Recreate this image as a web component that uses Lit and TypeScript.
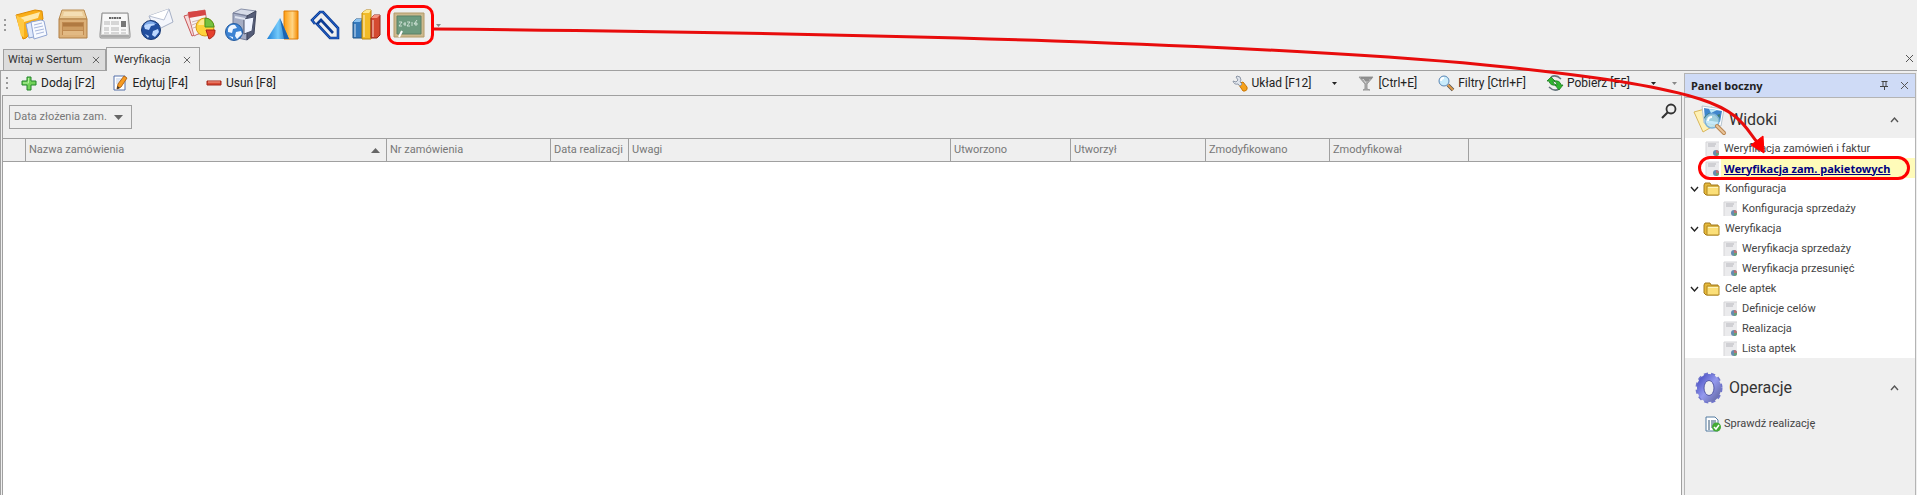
import { LitElement, html, css, svg, nothing } from "lit";
import { customElement, state } from "lit/decorators.js";

const box = (size: number, body: unknown) =>
  html`<svg class="icon" width=${size} height=${size} viewBox="0 0 ${size} ${size}" aria-hidden="true">${body}</svg>`;

const big = {
  notes: svg`<g stroke-linejoin="round"><path d="m1 6 19-5 7 1 1 8-17 19-3 1z" fill="#f9ae17" stroke="#dc8a05"/><path d="m4 9 21-6-2 6-14 4-1 14z" fill="#ffe9a8"/><path d="m1 6 8 5v17l-3-1z" fill="#ffc943"/><path d="m11 15 8-3 4 15-9 2z" fill="#dfe9fc" stroke="#8aa0cf"/><path d="m16 13 10-2 3 1 3 14-13 4z" fill="#f7faff" stroke="#91a5d2"/><path d="m19 16 8-2m-8 5 9-2m-8 5 9-2m-8 5 8-2" stroke="#a9b8dc" fill="none"/></g>`,
  box: svg`<path d="M5 1h22l3 9H2z" fill="#ebcb97" stroke="#b98c52"/><path d="M7 3h18l1 4H6z" fill="#f4deb4"/><path d="M2 10h28v19H2z" fill="#dcb078" stroke="#b07e45"/><path d="M5 13h22v13H5z" fill="#c08a50"/><path d="M6 14h20v3H6z" fill="#b07a42"/><path d="M6 18h20v3H6z" fill="#cd9d63"/><path d="M6 22h20v4H6z" fill="#e2b983"/>`,
  news: svg`<path d="M3 4h26l2 21v3q0 1-1 1H2q-1 0-1-1v-3z" fill="#d9d9d8" stroke="#8f8f8f"/><path d="M4 5h24l1 20H3z" fill="#f8f8f8"/><path d="M10 9h12" stroke="#666" stroke-width="2" stroke-dasharray="2 .5"/><path d="M5 13h6m1 0h8M5 15h6m1 0h8M5 19h5m2 0h8M5 21h5m2 0h8m2 0h5M5 24h5m2 0h8m2 0h5" stroke="#b4b4b4"/><path d="M22 12h5v6h-5z" fill="#777"/><path d="M2 27h28" stroke="#aaa" stroke-width="2"/>`,
  mail: svg`<path d="M8 7 28 0l4 13-18 9z" fill="#f4f6fc" stroke="#a6b0c5"/><path d="m8 7 15 4 5-11" fill="#fff" stroke="#b8c1d4"/><circle cx="10" cy="21" r="9.500" fill="#234f9f" stroke="#183974"/><path d="M3 17q3-5 9-4l2 3-4 1-2 4-4-1zm9 5 5-2 1 3-4 5-3-2zM4 25l4 2-1 2z" fill="#bdd8ff"/><path d="M3 16q5-7 13-1-6-1-13 1" fill="#7ea9e8"/>`,
  report: svg`<path d="m1 7 14-4 6 20-12 4z" fill="#f6dada" stroke="#c85555"/><path d="m5 4 17-3 3 19-14 7z" fill="#f9f2f2" stroke="#c77"/><path d="m5 3 17-2 1 5L6 9z" fill="#d64545"/><path d="m9 13 7-2m-7 5 5-2m-4 5 3-1" stroke="#ccb3b3"/><circle cx="22" cy="18" r="9" fill="#ffd23b" stroke="#d79a12"/><path d="M22 18V9a9 9 0 0 1 9 9z" fill="#77c13e" stroke="#4b9222"/><path d="M23 21h9a9 9 0 0 1-6 9z" fill="#e6402d" stroke="#a92214"/><path d="M15 16q2-6 6-6v6z" fill="#ffe98f"/>`,
  server: svg`<path d="m8 4 8-4 15 2-6 5z" fill="#d6dbe8" stroke="#8991a8"/><path d="m8 4 14 3v24L8 28z" fill="#a5adc5" stroke="#767e98"/><path d="m22 7 9-5-2 23-7 6z" fill="#555d78" stroke="#3e455c"/><path d="m19 10 10-2-2 14-8 3z" fill="#eef3ff" stroke="#4b536c"/><path d="m10 8 10 2" stroke="#dfe4f0" stroke-width="2"/><circle cx="9" cy="23" r="8.500" fill="#3c83d3" stroke="#245b9f"/><path d="M3 20q2-5 7-4l2 3-4 1-1 4-4-1zm8 3 5-1 1 3-5 5-2-3zm-7 4 4 1v2z" fill="#eef6ff"/>`,
  shapes: svg`<defs><linearGradient id="g-blue" x2="1"><stop stop-color="#1d7fd6"/><stop offset=".5" stop-color="#73c9fa"/><stop offset="1" stop-color="#1565b7"/></linearGradient><linearGradient id="g-orange" x2="1"><stop stop-color="#ff9c0e"/><stop offset=".6" stop-color="#ffd585"/><stop offset="1" stop-color="#f48a00"/></linearGradient></defs><path d="M17 2h14v28H17z" fill="url(#g-orange)" stroke="#dc7c08"/><path d="M0 30 13 9l9 21z" fill="url(#g-blue)"/><path d="m13 9 4 21h5z" fill="#1b64b2"/>`,
  clip: svg`<path d="M6 15 3 11l8-8h3l15 16v10h-8L8 15l4-4 12 13" fill="none" stroke="#0d3c94" stroke-width="2.600"/><path d="M6 15 3 11l8-8h3l15 16v10h-8L8 15" fill="none" stroke="#2d72df" stroke-width=".8"/>`,
  bars: svg`<path d="m2 13 3-3h6v19H2z" fill="#3479bd" stroke="#205486"/><path d="m2 13 3-3h6l-2 3z" fill="#8dc3ef"/><path d="m11 4 4-3h5v29h-9z" fill="#f1bb27" stroke="#b88512"/><path d="m11 4 4-3h5l-2 3z" fill="#ffe88d"/><path d="m20 9 3-3h6v20l-3 3h-6z" fill="#d44a31" stroke="#94281a"/><path d="m20 9 3-3h6l-3 3z" fill="#f59480"/><path d="M13 6v22M22 11v17M4 15v13" stroke="#fff" opacity=".4" stroke-width="2"/>`,
  board: svg`<path d="M1 4h30v24H1z" fill="#cdb98e" stroke="#b39a68"/><path d="M4 7h24v18H4z" fill="#6d9a7e" stroke="#5a8167"/><path d="M6 13h3l-3 4h3m1-2h3m-1-2v4m2-4h3l-3 4h3m1-3h2m-2 2h2m4-5-3 4h4m-2-2v4" stroke="#e0ede4" stroke-width=".8" fill="none"/><path d="m6 28 3-6" stroke="#fff" stroke-width="2"/>`,
};

const small = {
  add: svg`<path d="M6 2h4v4h5v4h-5v5H6v-5H1V6h5z" fill="#71d158" stroke="#23852b"/><path d="M7.500 3v5H2" stroke="#b8f1a5" fill="none"/>`,
  edit: svg`<path d="M1 1h11v14H1z" fill="#fff" stroke="#526ea8"/><path d="M3 4h6M3 6h6M3 8h4" stroke="#b9c9e4"/><path d="m4 14 1-5 6-8 3 2-6 9z" fill="#f79b21" stroke="#b3681a"/><path d="m4 14 .5-3L7 13z" fill="#333"/>`,
  remove: svg`<path d="M1 6h14v4H1z" fill="#d94a34" stroke="#a22419"/><path d="M2 7h12" stroke="#f3a18f"/>`,
  wrench: svg`<path d="m8 8 3-1 4 5q1 3-2 4h-2l-4-6z" fill="#f5a11c" stroke="#c97706"/><path d="M5 1Q9 1 9 5l-1 2 2 2-2 2-2-2Q2 10 1 6l3 1 2-2-2-3z" fill="#dfe4ec" stroke="#8f99a8"/>`,
  funnel: svg`<path d="M1 2h14L9 9v5l3 1H5l2-1V9z" fill="#aaa" stroke="#999"/><path d="M3 3h11M5 5h6" stroke="#777"/><path d="m5 4 3 4" stroke="#ddd"/>`,
  lens: svg`<circle cx="6" cy="6" r="5" fill="#c9ecfc" stroke="#5a86b4"/><path d="M3 6q0-3 3-3" stroke="#fff" stroke-width="2" fill="none"/><path d="m10 10 5 5" stroke="#555" stroke-width="3.500"/><path d="m10 10 5 5" stroke="#e09a48" stroke-width="2"/>`,
  refresh: svg`<path d="M4 2q5-3 10 2M12 14q-5 3-10-2" stroke="#66757c" stroke-width="1.500" fill="none"/><path d="m0 6 4-4 4 4H6q0 3 3 4-6 1-7-4zM16 10l-4 5-4-5h2q0-3-3-4 6-1 7 4z" fill="#2fb52f" stroke="#197c1d" stroke-width=".8"/>`,
  page: svg`<path d="M1 1h13v14H1z" fill="#ebebed"/><path d="M1 15V1h13" fill="none" stroke="#d5d5d8"/><path d="M3 3h8M3 5h7" stroke="#b5b5bb"/><circle cx="11" cy="12" r="3" fill="#668bb0"/><path d="M11 12V9a3 3 0 0 1 3 3z" fill="#b97272"/><path d="M11 12h3a3 3 0 0 1-3 3z" fill="#68a077"/>`,
  folder: svg`<path d="m0 4 1-2h5l1 2h7v10H2l-2-2z" fill="#e5b83a" stroke="#a37b1d"/><path d="M3 5h12v9H3z" fill="#fbdf78" stroke="#b28922"/><path d="M4 6.500h10" stroke="#fff4ba"/>`,
  check: svg`<path d="M1 1h9l3 3v11H1z" fill="#fff" stroke="#537ba0"/><path d="M3 5h2m1 0h5M3 7h2m1 0h5M3 9h2m1 0h4M3 11h2m1 0h2M3 13h2" stroke="#315273"/><circle cx="11.500" cy="11" r="4.500" fill="#44aa35"/><path d="m9 11 2 2 3-4" fill="none" stroke="#fff" stroke-width="1.500"/>`,
};

const cross = (s = 9) =>
  html`<svg class="icon" width=${s} height=${s} viewBox="0 0 9 9" aria-hidden="true"><path d="m1 1 7 7m0-7-7 7" stroke="#555" fill="none"/></svg>`;
const caret = (light = false) =>
  html`<svg class="icon" width="5" height="3" viewBox="0 0 5 3" aria-hidden="true"><path d="M0 0h5L2.500 3z" fill=${light ? "#888" : "#222"} /></svg>`;
const chevron = (up: boolean) =>
  html`<svg class="icon" width="9" height="6" viewBox="0 0 9 6" aria-hidden="true"><path d=${up ? "m1 5 3.500-4L8 5" : "m1 1 3.500 4L8 1"} stroke=${up ? "#555" : "#222"} stroke-width="1.400" fill="none" /></svg>`;

const widoki = svg`<path d="m0 8 18-5 3 18-12 7z" fill="#fff1b5" stroke="#d8b65a"/><path d="m8 2 22 3-3 17-17-3z" fill="#fff" stroke="#b7c5cf"/><path d="m10 4 18 3-2 11-15-2z" fill="#3f86cc"/><path d="m10 13 5-4 5 3 6-2-1 8-14-2z" fill="#397a70"/><path d="m15 5 8 1-6 3z" fill="#bde9f8"/><circle cx="18" cy="17" r="7" fill="#b9e5f8" fill-opacity=".8" stroke="#7fb4d8" stroke-width="1.500"/><path d="M14 17q0-4 4-4" fill="none" stroke="#fff" stroke-width="2"/><path d="m23 22 7 7" stroke="#b98550" stroke-width="4" stroke-linecap="round"/><path d="m23 22 7 7" stroke="#eac59a" stroke-width="2" stroke-linecap="round"/>`;
const gear = svg`<defs><linearGradient id="g-gear" x2="1" y2="1"><stop stop-color="#5258c8"/><stop offset=".5" stop-color="#9499ee"/><stop offset="1" stop-color="#6a6fae"/></linearGradient></defs><ellipse cx="15" cy="16" rx="12" ry="14" fill="none" stroke="#6f74cc" stroke-width="3" stroke-dasharray="4 3"/><ellipse cx="15" cy="16" rx="8.500" ry="10.500" fill="none" stroke="url(#g-gear)" stroke-width="7"/><ellipse cx="15" cy="16" rx="5" ry="7.500" fill="#efefef" stroke="#5257a7"/>`;

const modules: [string, unknown][] = [
  ["Notatki", big.notes], ["Magazyn", big.box], ["Wiadomości", big.news], ["Poczta", big.mail], ["Raporty", big.report],
  ["Serwer", big.server], ["Kształty", big.shapes], ["Załączniki", big.clip], ["Wykresy", big.bars], ["Weryfikacja", big.board],
];

const columns: [string, string][] = [
  ["", "c-mark"], ["Nazwa zamówienia", "c-name"], ["Nr zamówienia", "c-no"], ["Data realizacji", "c-date"], ["Uwagi", "c-notes"],
  ["Utworzono", "c-created"], ["Utworzył", "c-author"], ["Zmodyfikowano", "c-mod"], ["Zmodyfikował", "c-editor"], ["", ""],
];

type Group = { title: string; items: string[] };
const groups: Group[] = [
  { title: "Konfiguracja", items: ["Konfiguracja sprzedaży"] },
  { title: "Weryfikacja", items: ["Weryfikacja sprzedaży", "Weryfikacja przesunięć"] },
  { title: "Cele aptek", items: ["Definicje celów", "Realizacja", "Lista aptek"] },
];

@customElement("app-root")
export class AppRoot extends LitElement {
  @state() private active = 1;

  static styles = css`
    :host {
      display: flex;
      flex-direction: column;
      position: relative;
      min-height: 100vh;
      box-sizing: border-box;
      background: #efefef;
      color: #333;
      font: 11px/20px Roboto, sans-serif;
      overflow: hidden;
    }
    * { box-sizing: border-box; }
    button, select { font: inherit; color: inherit; background: none; border: 0; padding: 0; margin: 0; }
    a { color: inherit; text-decoration: none; }
    .icon { display: block; flex: none; overflow: visible; }
    .grip { width: 2px; height: 12px; background: repeating-linear-gradient(#999 0 2px, transparent 2px 5px); }

    .modules { display: flex; align-items: center; gap: 10px; height: 47px; padding: 2px 4px 0; }
    .modules .grip { margin-right: -1px; }
    .module { position: relative; }
    .marked::after { content: ""; position: absolute; inset: -4px -9px -4px -6px; border: 3px solid #f00; border-radius: 10px; }
    .more { align-self: flex-start; margin: 22px 0 0 1px; }

    .tabs { display: flex; align-items: flex-end; height: 24px; padding-left: 3px; border-bottom: 1px solid #a0a0a0; }
    .tab { display: flex; align-items: center; gap: 10px; height: 21px; padding: 0 5px 0 4px; background: #dcdcdc; border: 1px solid #a0a0a0; border-bottom: 0; }
    .tab.on { gap: 12px; height: 24px; padding: 0 8px 0 7px; margin-bottom: -1px; background: #efefef; }
    .tabs .close { margin: 0 3px 7px auto; }

    .body { flex: 1; display: flex; }
    .main { flex: 1; display: flex; flex-direction: column; min-width: 0; border-left: 1px solid #a0a0a0; padding-left: 1px; }
    .bar { display: flex; align-items: center; height: 25px; padding: 0 5px 0 4px; border-bottom: 1px solid #a0a0a0; font-size: 12px; line-height: 24px; color: #222; }
    .bar button { display: flex; align-items: center; gap: 4px; white-space: nowrap; }
    .left, .right { display: flex; align-items: center; }
    .left { gap: 18px; margin-left: 13px; }
    .right { margin-left: auto; gap: 21px; }
    .right .end { margin-left: -5px; }

    .sheet { flex: 1; display: flex; flex-direction: column; border: 1px solid #a0a0a0; border-width: 0 1px; background: #fff; }
    .filter { display: flex; align-items: center; height: 42px; padding: 0 4px 0 6px; background: #efefef; }
    .combo { position: relative; display: flex; align-items: center; }
    .combo select { appearance: none; width: 123px; height: 24px; padding: 0 20px 0 4px; border: 1px solid #a0a0a0; color: #777; }
    .combo svg { position: absolute; right: 9px; pointer-events: none; }
    .find { margin: -12px 0 0 auto; }

    table { width: 100%; table-layout: fixed; border-collapse: separate; border-spacing: 0; }
    th { height: 24px; padding: 0 3px; border: solid #a0a0a0; border-width: 1px 1px 1px 0; background: #efefef; color: #777; font-weight: 400; text-align: left; white-space: nowrap; overflow: hidden; }
    th:last-child { border-right: 0; }
    .th { display: flex; align-items: center; justify-content: space-between; padding-right: 3px; }
    .c-mark { width: 23px; } .c-name { width: 361px; } .c-no { width: 164px; } .c-date { width: 78px; } .c-notes { width: 322px; }
    .c-created { width: 120px; } .c-author { width: 135px; } .c-mod { width: 124px; } .c-editor { width: 139px; }

    aside { flex: none; width: 232px; margin: 2px 1px 0 2px; border: 1px solid #b4b4b4; border-bottom: 0; }
    .head { display: flex; align-items: center; gap: 11px; height: 24px; padding: 0 6px; background: #cfdbf6; font-family: "Noto Sans", sans-serif; font-weight: 700; color: #222; border-bottom: 1px solid #b4b4b4; }
    .head span { flex: 1; }
    .section { display: flex; align-items: center; gap: 3px; height: 40px; padding: 4px 16px 0 9px; font-size: 16px; color: #333; }
    .section span { flex: 1; }
    .section.ops { height: 55px; }
    .tree { background: #fff; }
    .row { display: flex; align-items: center; gap: 3px; height: 20px; padding: 1px 0 0 20px; color: #444; }
    .row.deep { padding-left: 38px; }
    .row.group { padding-left: 5px; gap: 5px; width: 100%; }
    .row.on { position: relative; background: linear-gradient(90deg, transparent 36px, #fffbb9 36px); color: #000080; font-family: "Noto Sans", sans-serif; font-weight: 700; }
    .row.on span { text-decoration: underline; }
    .row.on::after { content: ""; position: absolute; inset: -2px 5px -2px 13px; border: 3px solid #f00; border-radius: 12px; }
    .arrow { position: absolute; inset: 0 0 auto; width: 100%; height: 160px; pointer-events: none; }
  `;

  private leaf(text: string, deep = false, on = false) {
    return html`<a href="#" class="row ${deep ? "deep" : ""} ${on ? "on" : ""}">${box(16, small.page)}<span>${text}</span></a>`;
  }

  private tab(text: string, i: number) {
    return html`<button class="tab ${this.active === i ? "on" : ""}" role="tab" aria-selected=${this.active === i} @click=${() => (this.active = i)}>${text}${cross(8)}</button>`;
  }

  render() {
    return html`
      <div class="modules" role="toolbar" aria-label="Moduły">
        <i class="grip"></i>
        ${modules.map(([name, icon], i) => html`<button class="module ${i === 9 ? "marked" : ""}" aria-label=${name}>${box(32, icon)}</button>`)}
        <button class="more" aria-label="Więcej">${caret(true)}</button>
      </div>
      <div class="tabs" role="tablist">
        ${this.tab("Witaj w Sertum", 0)}${this.tab("Weryfikacja", 1)}
        <button class="close" aria-label="Zamknij">${cross()}</button>
      </div>
      <div class="body">
        <main class="main">
          <div class="bar">
            <i class="grip"></i>
            <div class="left">
              <button>${box(16, small.add)}Dodaj [F2]</button>
              <button>${box(16, small.edit)}Edytuj [F4]</button>
              <button>${box(16, small.remove)}Usuń [F8]</button>
            </div>
            <div class="right">
              <button>${box(16, small.wrench)}Układ [F12]</button>
              <button aria-label="Opcje układu">${caret()}</button>
              <button>${box(16, small.funnel)}[Ctrl+E]</button>
              <button>${box(16, small.lens)}Filtry [Ctrl+F]</button>
              <button>${box(16, small.refresh)}Pobierz [F5]</button>
              <button aria-label="Opcje pobierania">${caret()}</button>
              <button class="end" aria-label="Więcej">${caret(true)}</button>
            </div>
          </div>
          <div class="sheet">
            <div class="filter">
              <label class="combo">
                <select aria-label="Filtr"><option>Data złożenia zam.</option></select>
                <svg width="9" height="5" viewBox="0 0 9 5"><path d="M0 0h9L4.500 5z" fill="#666" /></svg>
              </label>
              <button class="find" aria-label="Szukaj">
                <svg class="icon" width="16" height="16" viewBox="0 0 16 16"><circle cx="10" cy="6" r="4.500" fill="none" stroke="#333" stroke-width="1.800" /><path d="m7 9-6 6" stroke="#333" stroke-width="2.200" /></svg>
              </button>
            </div>
            <table>
              <thead>
                <tr>
                  ${columns.map(([text, cls], i) => html`<th class=${cls} scope="col"><div class="th">${text}${i === 1 ? html`<svg class="icon" width="9" height="5" viewBox="0 0 9 5"><path d="M0 5h9L4.500 0z" fill="#666" /></svg>` : nothing}</div></th>`)}
                </tr>
              </thead>
            </table>
          </div>
        </main>
        <aside>
          <div class="head">
            <span>Panel boczny</span>
            <button aria-label="Przypnij"><svg class="icon" width="9" height="9" viewBox="0 0 9 9"><path d="M1.500.5h6M3 1v4.500M6 1v4.500M0 5.500h8M4.500 6v3" stroke="#444" fill="none" /></svg></button>
            <button aria-label="Zamknij panel">${cross()}</button>
          </div>
          <div class="section">${box(32, widoki)}<span>Widoki</span>${chevron(true)}</div>
          <nav class="tree">
            ${this.leaf("Weryfikacja zamówień i faktur")}${this.leaf("Weryfikacja zam. pakietowych", false, true)}
            ${groups.map((g) => html`<button class="row group">${chevron(false)}${box(16, small.folder)}<span>${g.title}</span></button>${g.items.map((t) => this.leaf(t, true))}`)}
          </nav>
          <div class="section ops">${box(32, gear)}<span>Operacje</span>${chevron(true)}</div>
          <a href="#" class="row">${box(16, small.check)}<span>Sprawdź realizację</span></a>
        </aside>
      </div>
      <svg class="arrow" viewBox="0 0 1917 160" preserveAspectRatio="none" aria-hidden="true">
        <path d="M434 29C650 31 880 35 1054 41S1380 55 1485 65S1660 86 1700 99S1745 127 1757 142" fill="none" stroke="#e80c0c" stroke-width="3" />
        <path d="m1751 145 12-9 1 17z" fill="#f00" stroke="#f00" />
      </svg>
    `;
  }
}
